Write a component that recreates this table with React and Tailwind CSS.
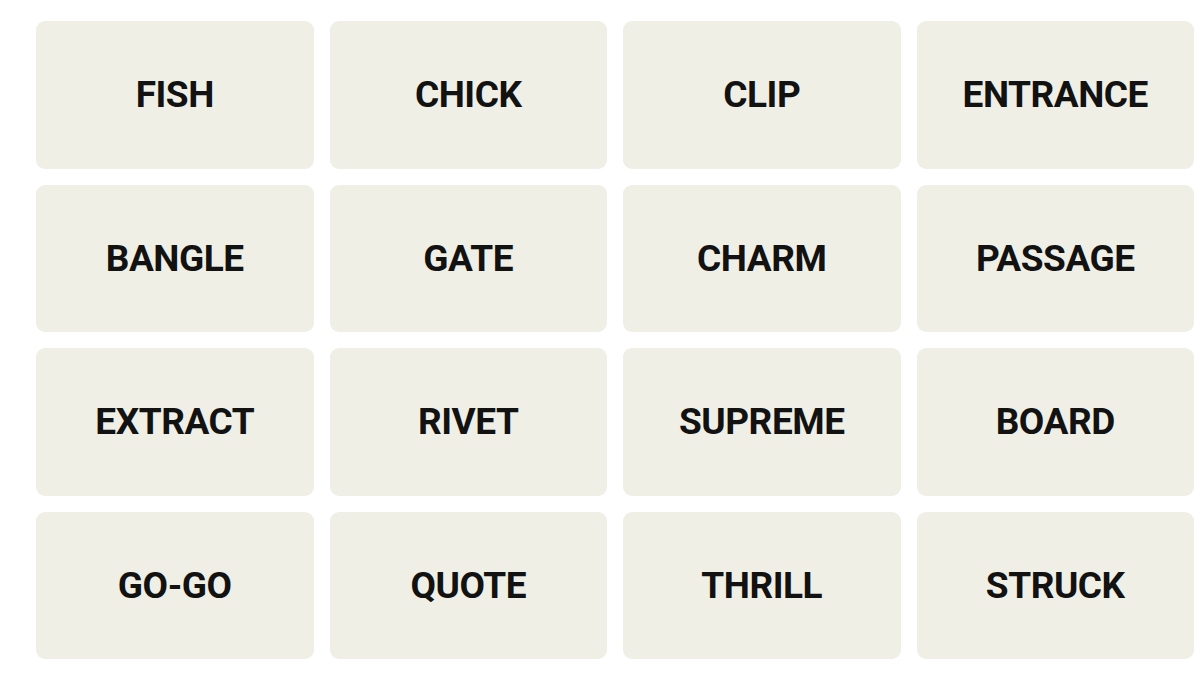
import React from "react";

const words = [
    "FISH", "CHICK", "CLIP", "ENTRANCE",
    "BANGLE", "GATE", "CHARM", "PASSAGE",
    "EXTRACT", "RIVET", "SUPREME", "BOARD",
    "GO-GO", "QUOTE", "THRILL", "STRUCK",
];

export default function App() {
    return (
        <div className="w-[1200px] h-[675px] bg-white pl-[36px] pt-[21px] overflow-hidden">
            <div className="grid grid-cols-4 gap-4 w-[1158px]">
                {words.map((word) => (
                    <div
                        key={word}
                        className="h-[147.5px] rounded-[9px] bg-[#efefe6] flex items-center justify-center"
                    >
                        <span className="font-['Roboto',sans-serif] font-bold text-[37px] text-[#121212] tracking-[-0.45px]">
                            {word}
                        </span>
                    </div>
                ))}
            </div>
        </div>
    );
}
